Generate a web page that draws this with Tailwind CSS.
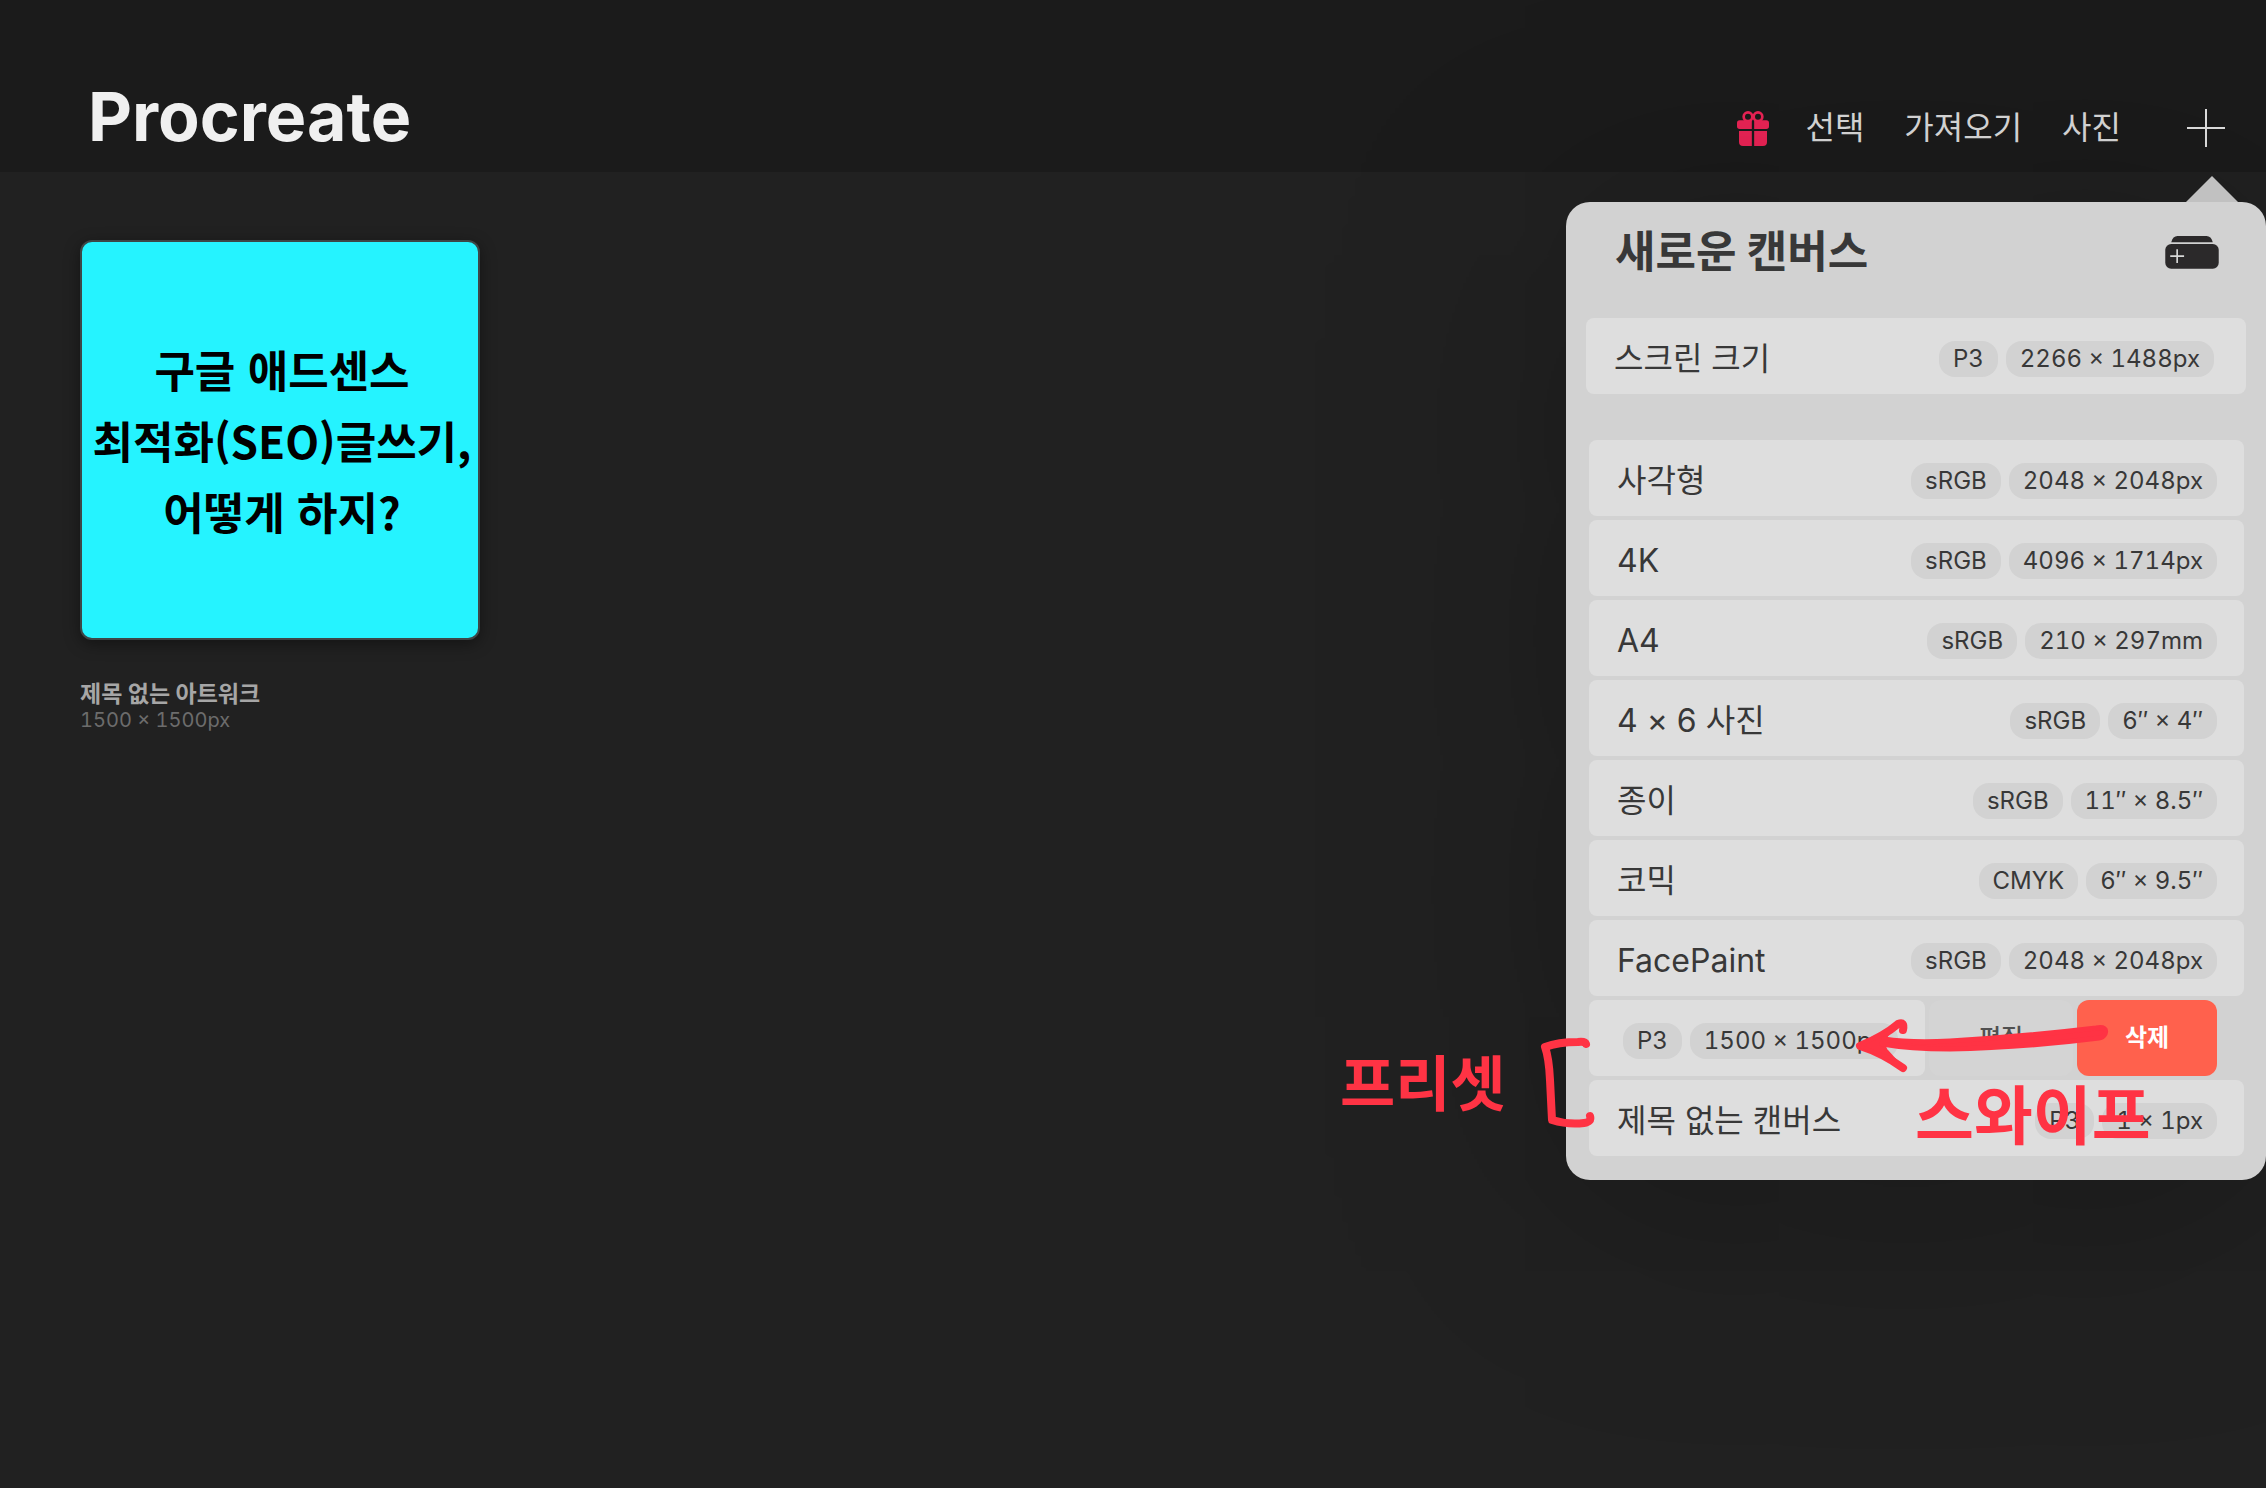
<!DOCTYPE html>
<html lang="ko">
<head>
<meta charset="utf-8">
<meta name="viewport" content="width=device-width, initial-scale=1">
<title>Procreate</title>
<script src="https://cdn.jsdelivr.net/npm/@tailwindcss/browser@4"></script>
</head>
<body class="bg-[#212121]">
<div class="relative min-h-screen overflow-hidden font-['Inter','Noto_Sans_CJK_KR',sans-serif]">

  <header class="flex h-[172px] items-start justify-between bg-[#1b1b1b] pl-[88px] pr-[41px]">
    <h1 class="pt-[76px] text-[68px] leading-[80px] font-bold text-[#f0f0f0]">Procreate</h1>
    <nav class="flex items-center gap-10 pt-[108px] text-[32px] leading-10 text-[#dcdcdc]">
      <button type="button" aria-label="선물">
        <svg class="block h-[35px] w-8" viewBox="54 48 96 105" fill="#ef2457">
          <circle cx="87" cy="65" r="13" fill="none" stroke="#ef2457" stroke-width="8"/>
          <circle cx="117" cy="65" r="13" fill="none" stroke="#ef2457" stroke-width="8"/>
          <path d="M62 76H98.500V102H62Q54 102 54 94V84Q54 76 62 76ZM105.500 76H142Q150 76 150 84V94Q150 102 142 102H105.500ZM60 108H98.500V153H72Q60 153 60 141ZM105.500 108H144V141Q144 153 132 153H105.500Z"/>
        </svg>
      </button>
      <button type="button" class="-ml-1">선택</button>
      <button type="button">가져오기</button>
      <button type="button">사진</button>
      <button type="button" class="ml-[26px]" aria-label="새로운 캔버스">
        <svg class="block h-[38px] w-[38px]" viewBox="0 0 38 38" stroke="#e2e2e2" stroke-width="2"><path d="M19 0V38M0 19H38"/></svg>
      </button>
    </nav>
  </header>

  <main class="px-20 pt-[68px]">
    <figure class="w-[400px]">
      <div class="flex h-[400px] items-center justify-center rounded-xl border-2 border-[#3d4647] bg-[#25f3ff] pl-1 shadow-[0_4px_16px_rgba(0,0,0,0.4)]">
        <p class="text-center font-['Noto_Sans_CJK_KR',sans-serif] text-[44px] leading-[71px] font-bold whitespace-nowrap text-black">구글 애드센스<br>최적화(SEO)글쓰기,<br>어떻게 하지?</p>
      </div>
      <figcaption class="pt-10">
        <p class="text-[23px] leading-7 font-bold text-[#a6a6a6]">제목 없는 아트워크</p>
        <p class="text-[20px] leading-6 text-[#6c6c6c] tabular-nums">1500 × 1500px</p>
      </figcaption>
    </figure>
  </main>

  <section class="absolute top-[202px] right-0 w-[700px] rounded-3xl bg-[#d2d2d2] pb-6 text-[#383838] shadow-[0_20px_240px_rgba(0,0,0,0.3)]" aria-label="새로운 캔버스">
    <svg class="absolute -top-[26px] right-7 h-[26px] w-[52px]" viewBox="0 0 52 26" fill="#c1c1c1"><path d="M26 0L52 26H0Z"/></svg>

    <div class="flex h-[100px] items-center justify-between pr-[47px] pl-[49px]">
      <h2 class="text-[44px] leading-[60px] font-bold">새로운 캔버스</h2>
      <button type="button" aria-label="캔버스 추가">
        <svg class="block h-[33px] w-[54px]" viewBox="105 440 162 100" fill="#2b292a">
          <path d="M123 459Q128 440 142 440H230Q244 440 249 459Z"/>
          <rect x="105" y="464" width="162" height="75" rx="18"/>
          <path d="M141 480V522M120 501H162" stroke="#d8d8d8" stroke-width="5"/>
        </svg>
      </button>
    </div>

    <div class="px-5 pt-4">
      <button type="button" class="flex h-[76px] w-full items-center justify-between rounded-lg bg-[#dedede] pt-[6px] pr-8 pl-7 text-left">
        <span class="text-[32px] leading-10">스크린 크기</span>
        <span class="flex gap-2 text-[24px] leading-9 tabular-nums"><span class="rounded-2xl bg-[#d2d2d2] px-[14px]">P3</span><span class="rounded-2xl bg-[#d2d2d2] px-[14px]">2266 × 1488px</span></span>
      </button>
    </div>

    <ul class="flex flex-col gap-1 pt-[46px] pr-[22px] pl-[23px]">
      <li><button type="button" class="flex h-[76px] w-full items-center justify-between rounded-lg bg-[#dedede] pt-[6px] pr-[27px] pl-7 text-left">
        <span class="text-[32px] leading-10">사각형</span>
        <span class="flex gap-2 text-[24px] leading-9 tabular-nums"><span class="rounded-2xl bg-[#d2d2d2] px-[14px]">sRGB</span><span class="rounded-2xl bg-[#d2d2d2] px-[14px]">2048 × 2048px</span></span>
      </button></li>
      <li><button type="button" class="flex h-[76px] w-full items-center justify-between rounded-lg bg-[#dedede] pt-[6px] pr-[27px] pl-7 text-left">
        <span class="text-[32px] leading-10">4K</span>
        <span class="flex gap-2 text-[24px] leading-9 tabular-nums"><span class="rounded-2xl bg-[#d2d2d2] px-[14px]">sRGB</span><span class="rounded-2xl bg-[#d2d2d2] px-[14px]">4096 × 1714px</span></span>
      </button></li>
      <li><button type="button" class="flex h-[76px] w-full items-center justify-between rounded-lg bg-[#dedede] pt-[6px] pr-[27px] pl-7 text-left">
        <span class="text-[32px] leading-10">A4</span>
        <span class="flex gap-2 text-[24px] leading-9 tabular-nums"><span class="rounded-2xl bg-[#d2d2d2] px-[14px]">sRGB</span><span class="rounded-2xl bg-[#d2d2d2] px-[14px]">210 × 297mm</span></span>
      </button></li>
      <li><button type="button" class="flex h-[76px] w-full items-center justify-between rounded-lg bg-[#dedede] pt-[6px] pr-[27px] pl-7 text-left">
        <span class="text-[32px] leading-10">4 × 6 사진</span>
        <span class="flex gap-2 text-[24px] leading-9 tabular-nums"><span class="rounded-2xl bg-[#d2d2d2] px-[14px]">sRGB</span><span class="rounded-2xl bg-[#d2d2d2] px-[14px]">6″ × 4″</span></span>
      </button></li>
      <li><button type="button" class="flex h-[76px] w-full items-center justify-between rounded-lg bg-[#dedede] pt-[6px] pr-[27px] pl-7 text-left">
        <span class="text-[32px] leading-10">종이</span>
        <span class="flex gap-2 text-[24px] leading-9 tabular-nums"><span class="rounded-2xl bg-[#d2d2d2] px-[14px]">sRGB</span><span class="rounded-2xl bg-[#d2d2d2] px-[14px]">11″ × 8.5″</span></span>
      </button></li>
      <li><button type="button" class="flex h-[76px] w-full items-center justify-between rounded-lg bg-[#dedede] pt-[6px] pr-[27px] pl-7 text-left">
        <span class="text-[32px] leading-10">코믹</span>
        <span class="flex gap-2 text-[24px] leading-9 tabular-nums"><span class="rounded-2xl bg-[#d2d2d2] px-[14px]">CMYK</span><span class="rounded-2xl bg-[#d2d2d2] px-[14px]">6″ × 9.5″</span></span>
      </button></li>
      <li><button type="button" class="flex h-[76px] w-full items-center justify-between rounded-lg bg-[#dedede] pt-[6px] pr-[27px] pl-7 text-left">
        <span class="text-[32px] leading-10">FacePaint</span>
        <span class="flex gap-2 text-[24px] leading-9 tabular-nums"><span class="rounded-2xl bg-[#d2d2d2] px-[14px]">sRGB</span><span class="rounded-2xl bg-[#d2d2d2] px-[14px]">2048 × 2048px</span></span>
      </button></li>
      <li class="flex h-[76px] gap-1 pr-[27px]">
        <button type="button" class="flex flex-1 items-center justify-end rounded-lg bg-[#dedede] pt-[6px] pr-[27px]">
          <span class="flex gap-2 text-[24px] leading-9 whitespace-nowrap tabular-nums"><span class="rounded-2xl bg-[#d2d2d2] px-[14px]">P3</span><span class="rounded-2xl bg-[#d2d2d2] px-[14px]">1500 × 1500px</span></span>
        </button>
        <button type="button" class="w-36 rounded-xl bg-[#d4d4d4] text-[24px] leading-9 font-medium text-[#505050]">편집</button>
        <button type="button" class="w-[140px] rounded-xl bg-[#ff614d] text-[24px] leading-9 font-bold text-white">삭제</button>
      </li>
      <li><button type="button" class="flex h-[76px] w-full items-center justify-between rounded-lg bg-[#dedede] pt-[6px] pr-[27px] pl-7 text-left">
        <span class="text-[32px] leading-10">제목 없는 캔버스</span>
        <span class="flex gap-2 text-[24px] leading-9 tabular-nums"><span class="rounded-2xl bg-[#d2d2d2] px-[14px]">P3</span><span class="rounded-2xl bg-[#d2d2d2] px-[14px]">1 × 1px</span></span>
      </button></li>
    </ul>

    <!-- Red pen notes over the preset list -->
    <div class="pointer-events-none absolute top-[788px] -left-[246px] h-[200px] w-[946px] text-[#ff3344]">
      <svg class="absolute inset-0 h-full w-full" viewBox="0 0 946 200" fill="none" stroke="#ff3344" stroke-width="8" stroke-linecap="round" stroke-linejoin="round">
        <path d="M266 54Q265 51 258 52Q238 52 225 57Q229 68 230 90L232 130Q248 135 264 133Q272 132 270 126"/>
        <path d="M583 40Q585 31 578 34Q564 46 540 56Q562 63 583 78"/>
        <path d="M540 56L570 41L562 52L566 60L575 70Z" fill="#ff3344" stroke-width="3"/>
        <path d="M564 49Q590 53 630 51Q700 47 776 38Q788 36 785 44Q783 48 779 48Q700 58 630 59Q590 59 562 54Z" fill="#ff3344" stroke-width="5"/>
      </svg>
      <p class="absolute top-[58px] left-[20px] text-[60px] leading-[72px] font-bold whitespace-nowrap">프리셋</p>
      <p class="absolute top-[90px] left-[595px] text-[64px] leading-[72px] font-bold whitespace-nowrap">스와이프</p>
    </div>
  </section>
</div>
</body>
</html>
